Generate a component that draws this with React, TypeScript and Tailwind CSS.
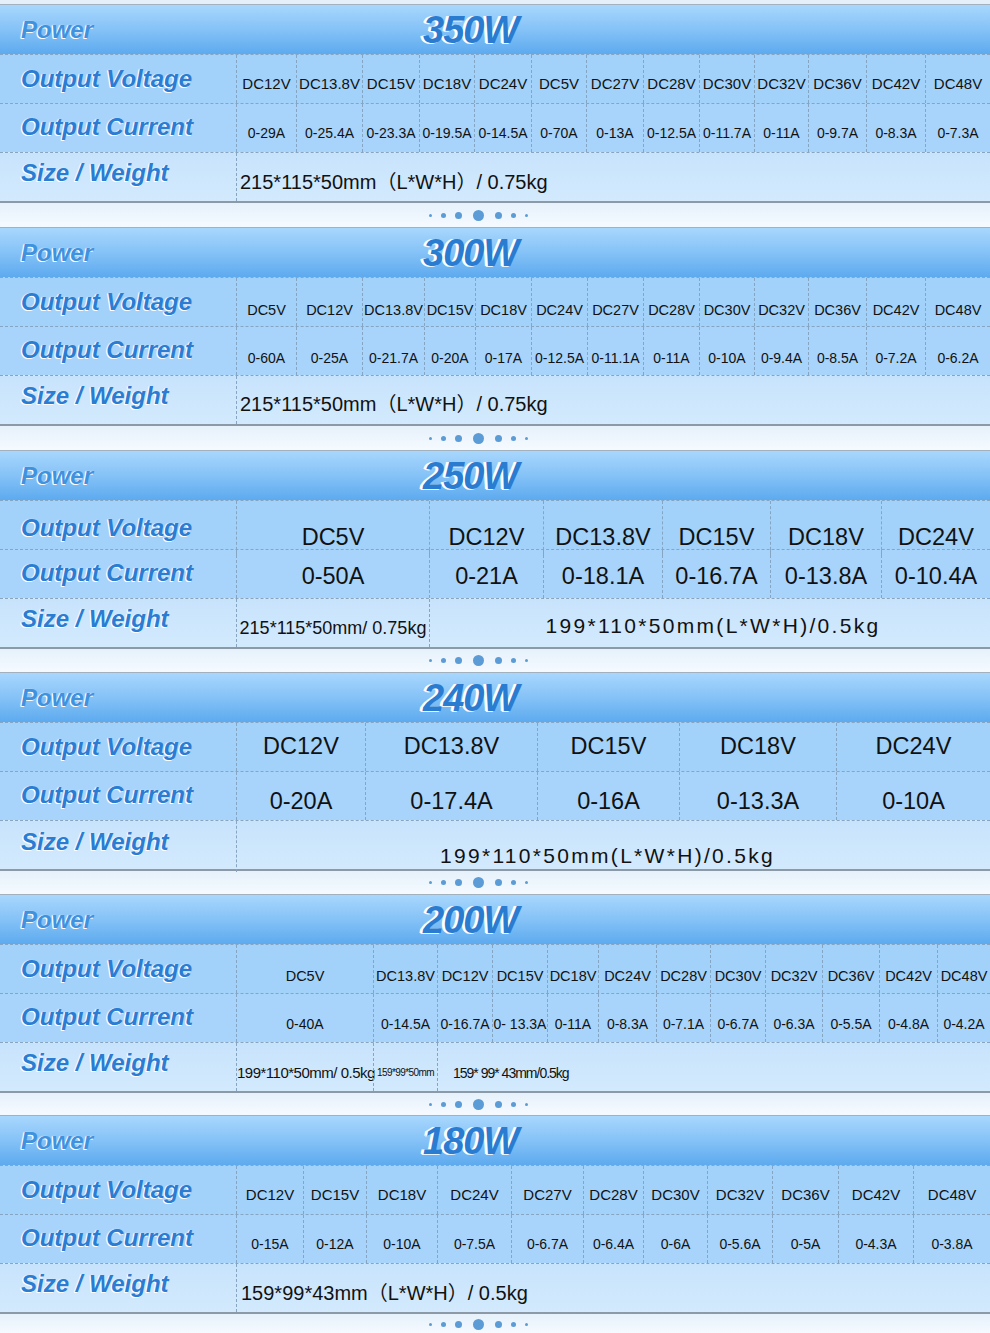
import type { ReactNode } from 'react';

interface Spec {
    watt: string;
    sep: string;
    cols: string;
    sizeCols: string;
    vPad: string;
    aPad: string;
    vText: string;
    aText: string;
    volts: string[];
    amps: string[];
    size: ReactNode;
}

const cell = 'flex items-center justify-center whitespace-nowrap border-l border-dashed border-[#86a5c2] text-[#111]';
// spaced-out half width look of the 199*110 lines
const wide = 'text-[21px] tracking-[2.3px]';

const specs: Spec[] = [
    {
        watt: '350W',
        sep: 'h-[24px]',
        cols: 'grid-cols-[236px_60px_66px_57px_55px_57px_55px_57px_56px_55px_54px_58px_59px_65px]',
        sizeCols: 'grid-cols-[236px_754px]',
        vPad: 'pt-[11px]',
        aPad: 'pt-[11px]',
        vText: 'text-[15px]',
        aText: 'text-[14px]',
        volts: ['DC12V', 'DC13.8V', 'DC15V', 'DC18V', 'DC24V', 'DC5V', 'DC27V', 'DC28V', 'DC30V', 'DC32V', 'DC36V', 'DC42V', 'DC48V'],
        amps: ['0-29A', '0-25.4A', '0-23.3A', '0-19.5A', '0-14.5A', '0-70A', '0-13A', '0-12.5A', '0-11.7A', '0-11A', '0-9.7A', '0-8.3A', '0-7.3A'],
        size: (
            <div className={`${cell} !justify-start pl-[3px] pt-[10px] text-[20px]`}>215*115*50mm（L*W*H）/ 0.75kg</div>
        ),
    },
    {
        watt: '300W',
        sep: 'h-[24px]',
        cols: 'grid-cols-[236px_60px_66px_62px_51px_56px_56px_56px_56px_55px_54px_58px_59px_65px]',
        sizeCols: 'grid-cols-[236px_754px]',
        vPad: 'pt-[18px]',
        aPad: 'pt-[15px]',
        vText: 'text-[14.5px]',
        aText: 'text-[14px]',
        volts: ['DC5V', 'DC12V', 'DC13.8V', 'DC15V', 'DC18V', 'DC24V', 'DC27V', 'DC28V', 'DC30V', 'DC32V', 'DC36V', 'DC42V', 'DC48V'],
        amps: ['0-60A', '0-25A', '0-21.7A', '0-20A', '0-17A', '0-12.5A', '0-11.1A', '0-11A', '0-10A', '0-9.4A', '0-8.5A', '0-7.2A', '0-6.2A'],
        size: (
            <div className={`${cell} !justify-start pl-[3px] pt-[7px] text-[20px]`}>215*115*50mm（L*W*H）/ 0.75kg</div>
        ),
    },
    {
        watt: '250W',
        sep: 'h-[23px]',
        cols: 'grid-cols-[236px_193px_114px_119px_108px_111px_109px]',
        sizeCols: 'grid-cols-[236px_193px_561px]',
        vPad: 'pt-[19px]',
        aPad: 'pt-[5px]',
        vText: 'text-[23.5px]',
        aText: 'text-[23.5px]',
        volts: ['DC5V', 'DC12V', 'DC13.8V', 'DC15V', 'DC18V', 'DC24V'],
        amps: ['0-50A', '0-21A', '0-18.1A', '0-16.7A', '0-13.8A', '0-10.4A'],
        size: (
            <>
                <div className={`${cell} pt-[11px] text-[18px]`}>215*115*50mm/ 0.75kg</div>
                <div className={`${cell} ${wide} pl-[6px] pt-[5px]`}>199*110*50mm(L*W*H)/0.5kg</div>
            </>
        ),
    },
    {
        watt: '240W',
        sep: 'h-[23px]',
        cols: 'grid-cols-[236px_129px_172px_142px_157px_154px]',
        sizeCols: 'grid-cols-[236px_754px]',
        vPad: 'pt-0',
        aPad: 'pt-[11px]',
        vText: 'text-[23.5px]',
        aText: 'text-[23.5px]',
        volts: ['DC12V', 'DC13.8V', 'DC15V', 'DC18V', 'DC24V'],
        amps: ['0-20A', '0-17.4A', '0-16A', '0-13.3A', '0-10A'],
        size: (
            <div className={`${cell} ${wide} pr-[12px] pt-[19px]`}>199*110*50mm(L*W*H)/0.5kg</div>
        ),
    },
    {
        watt: '200W',
        sep: 'h-[22px]',
        cols: 'grid-cols-[236px_137px_64px_55px_55px_51px_58px_54px_55px_57px_57px_58px_53px]',
        sizeCols: 'grid-cols-[236px_137px_64px_553px]',
        vPad: 'pt-[15px]',
        aPad: 'pt-[13px]',
        vText: 'text-[14.5px]',
        aText: 'text-[14px]',
        volts: ['DC5V', 'DC13.8V', 'DC12V', 'DC15V', 'DC18V', 'DC24V', 'DC28V', 'DC30V', 'DC32V', 'DC36V', 'DC42V', 'DC48V'],
        amps: ['0-40A', '0-14.5A', '0-16.7A', '0- 13.3A', '0-11A', '0-8.3A', '0-7.1A', '0-6.7A', '0-6.3A', '0-5.5A', '0-4.8A', '0-4.2A'],
        size: (
            <>
                <div className={`${cell} !justify-start overflow-visible pt-[13px] text-[15px] tracking-[-0.5px]`}>199*110*50mm/ 0.5kg</div>
                <div className={`${cell} pt-[11px] text-[10px] tracking-[-0.6px]`}>159*99*50mm</div>
                <div className={`${cell} !justify-start pl-[15px] pt-[13px] text-[14px] tracking-[-1px]`}>159* 99* 43mm/0.5kg</div>
            </>
        ),
    },
    {
        watt: '180W',
        sep: 'h-[20px]',
        cols: 'grid-cols-[236px_67px_63px_71px_74px_72px_60px_64px_65px_66px_75px_77px]',
        sizeCols: 'grid-cols-[236px_754px]',
        vPad: 'pt-[11px]',
        aPad: 'pt-[11px]',
        vText: 'text-[15px]',
        aText: 'text-[14px]',
        volts: ['DC12V', 'DC15V', 'DC18V', 'DC24V', 'DC27V', 'DC28V', 'DC30V', 'DC32V', 'DC36V', 'DC42V', 'DC48V'],
        amps: ['0-15A', '0-12A', '0-10A', '0-7.5A', '0-6.7A', '0-6.4A', '0-6A', '0-5.6A', '0-5A', '0-4.3A', '0-3.8A'],
        size: (
            <div className={`${cell} !justify-start pl-[4px] pt-[9px] text-[20px]`}>159*99*43mm（L*W*H）/ 0.5kg</div>
        ),
    },
];

function Label({ children, className = '' }: { children: ReactNode; className?: string }) {
    return (
        <div className={`flex items-center pl-[21px] text-[24px] font-bold italic text-[#2a7dd2] [text-shadow:-1px_1px_0_#fff,-1px_0_1px_#fff] ${className}`}>
            {children}
        </div>
    );
}

function Dots({ height }: { height: string }) {
    return (
        <div className={`flex items-center bg-[linear-gradient(to_bottom,#e6f1fb,#f5faff)] pl-[429px] ${height}`}>
            <div className="flex items-center gap-[9px]">
                <span className="h-[3px] w-[3px] rounded-full bg-[#5b9bd6]" />
                <span className="h-[5px] w-[5px] rounded-full bg-[#5b9bd6]" />
                <span className="mr-[2px] h-[7px] w-[7px] rounded-full bg-[#5b9bd6]" />
                <span className="h-[11px] w-[11px] rounded-full bg-[#5b9bd6]" />
                <span className="ml-[2px] h-[7px] w-[7px] rounded-full bg-[#5b9bd6]" />
                <span className="h-[5px] w-[5px] rounded-full bg-[#5b9bd6]" />
                <span className="h-[3px] w-[3px] rounded-full bg-[#5b9bd6]" />
            </div>
        </div>
    );
}

function Block({ spec }: { spec: Spec }) {
    return (
        <section>
            {/* header */}
            <div className="flex h-[50px] items-center border-t border-[#a2b1be] bg-[linear-gradient(to_bottom,#a8d7fd,#85c2f7_50%,#5daaef)]">
                <Label className="w-[236px] text-[#3f92dd]">Power</Label>
                <div className="pl-[187px] text-[38px] font-bold italic leading-none tracking-[-1px] text-[#2a7cd1] [text-shadow:-3px_0_0_#fff,-2px_1px_0_#e8f4ff]">
                    {spec.watt}
                </div>
            </div>

            <div className={`grid h-[49px] border-t border-dashed border-[#86a5c2] bg-[#a2d1fa] ${spec.cols}`}>
                <Label>Output Voltage</Label>
                {spec.volts.map((v, i) => (
                    <div key={i} className={`${cell} ${spec.vPad} ${spec.vText}`}>{v}</div>
                ))}
            </div>

            <div className={`grid h-[49px] border-t border-dashed border-[#86a5c2] bg-[#a8d4fb] ${spec.cols}`}>
                <Label className="pb-[3px]">Output Current</Label>
                {spec.amps.map((a, i) => (
                    <div key={i} className={`${cell} ${spec.aPad} ${spec.aText}`}>{a}</div>
                ))}
            </div>

            <div className={`grid h-[49px] border-t border-dashed border-[#86a5c2] bg-[linear-gradient(to_bottom,#c7e3fc,#d3eafd)] ${spec.sizeCols}`}>
                <Label className="pb-[9px]">Size / Weight</Label>
                {spec.size}
            </div>

            <div className="h-[2px] bg-[#8c9aa7]" />
            <Dots height={spec.sep} />
        </section>
    );
}

export default function App() {
    return (
        <div className="h-[1333px] w-[990px] overflow-hidden bg-[#f3f8fd] font-['Liberation_Sans','Noto_Sans_CJK_SC',sans-serif]">
            <div className="h-[4px] bg-[#e4effa]" />
            {specs.map((s) => (
                <Block key={s.watt} spec={s} />
            ))}
        </div>
    );
}
